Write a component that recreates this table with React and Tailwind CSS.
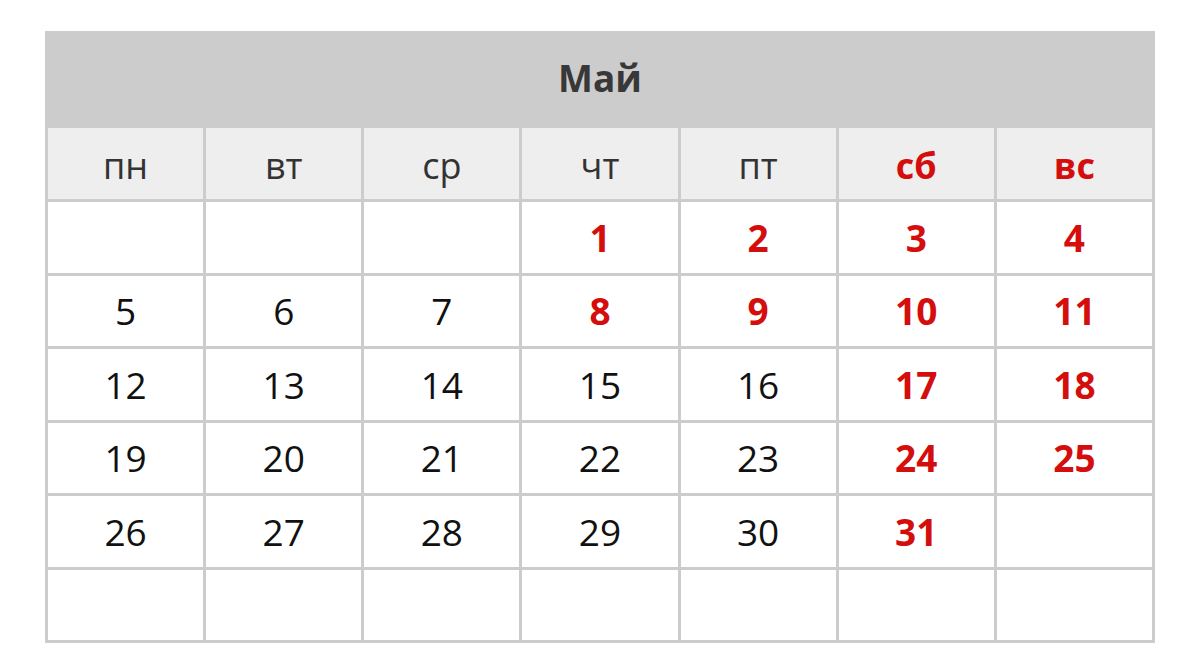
import React from "react";

const days = [
  { t: "пн", r: false },
  { t: "вт", r: false },
  { t: "ср", r: false },
  { t: "чт", r: false },
  { t: "пт", r: false },
  { t: "сб", r: true },
  { t: "вс", r: true },
];

const red = new Set(["1", "2", "3", "4", "8", "9", "10", "11", "17", "18", "24", "25", "31"]);

const cells = [
  "", "", "", "1", "2", "3", "4",
  "5", "6", "7", "8", "9", "10", "11",
  "12", "13", "14", "15", "16", "17", "18",
  "19", "20", "21", "22", "23", "24", "25",
  "26", "27", "28", "29", "30", "31", "",
  "", "", "", "", "", "", "",
];

export default function App() {
  return (
    <div className="w-[1200px] h-[664px] bg-white pt-[31px] pl-[45px]" style={{ fontFamily: "'Open Sans', sans-serif" }}>
      <div className="w-[1110px] bg-[#cccccc] flex flex-col">
        <div className="h-[97px] flex items-center justify-center text-[37px] font-bold text-[#383838] pb-[4px]">Май</div>
        <div className="grid grid-cols-7 gap-[3px] px-[3px]">
          {days.map((d) => (
            <div
              key={d.t}
              className={`h-[71px] bg-[#eeeeee] flex items-center justify-center text-[36px] pt-[4px] ${d.r ? "text-[#d40d0d] font-bold" : "text-[#333333]"}`}
            >
              {d.t}
            </div>
          ))}
        </div>
        <div className="grid grid-cols-7 gap-[3px] p-[3px] auto-rows-[70.5px]">
          {cells.map((c, i) => (
            <div
              key={i}
              className={`bg-white flex items-center justify-center text-[37px] ${red.has(c) ? "text-[#d40d0d] font-bold" : "text-[#111111]"}`}
            >
              {c}
            </div>
          ))}
        </div>
      </div>
    </div>
  );
}
